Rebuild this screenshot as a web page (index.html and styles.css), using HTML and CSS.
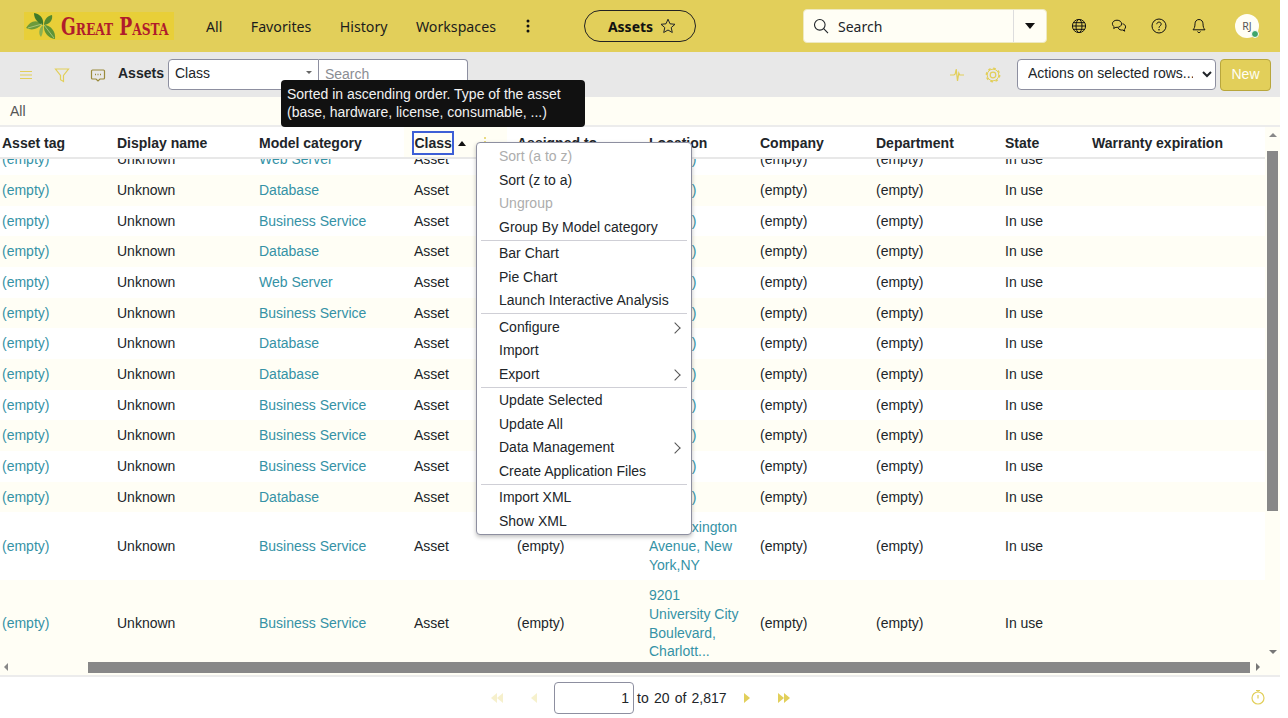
FILE: index.html
```html
<!DOCTYPE html>
<html lang="en">
<head>
  <meta charset="UTF-8" />
  <title>Assets</title>
  <link rel="stylesheet" href="styles.css">
</head>
<body>
<div class="app">
  <!-- top bar -->
  <header class="topbar">
    <div class="logo">
      <svg class="logo-leaf" viewBox="0 0 34 28" width="34" height="28">
        <path d="M1 16 C5 9 11 7 17 12 C13 17 7 19 1 16Z" fill="#6d9a3a"/>
        <path d="M9 1 C15 2 19 6 18 13 C13 11 9 7 9 1Z" fill="#3f7a2a"/>
        <path d="M27 3 C28 8 25 12 19 13 C19 8 22 4 27 3Z" fill="#55892f"/>
        <path d="M19 13 C26 13 31 20 30 27 C23 26 18 20 19 13Z" fill="#5f9436"/>
        <path d="M18 13 C18 18 18 22 16 25 C13 22 14 16 18 13Z" fill="#8ab04e"/>
        <path d="M19 13 L29 26 M17 12 L3 16" stroke="#cfe0a0" stroke-width=".6" fill="none"/>
      </svg>
      <span class="logo-text">Great Pasta</span>
    </div>
    <nav class="mainnav">
      <a>All</a>
      <a>Favorites</a>
      <a>History</a>
      <a>Workspaces</a>
      <svg class="kebab" viewBox="0 0 4 14" width="4" height="14"><circle cx="2" cy="2" r="1.5"/><circle cx="2" cy="7" r="1.5"/><circle cx="2" cy="12" r="1.5"/></svg>
    </nav>
    <div class="pill">
      <b>Assets</b>
      <svg viewBox="0 0 16 16" width="16" height="16"><path d="M8 1.2l2 4.600 5 .5-3.800 3.300 1.100 4.900L8 12l-4.300 2.500 1.100-4.900L1 6.300l5-.5z" fill="none" stroke="#212529" stroke-width="1"/></svg>
    </div>
    <div class="globalsearch">
      <svg viewBox="0 0 16 16" width="16" height="16"><circle cx="6.800" cy="6.800" r="5.300" fill="none" stroke="#212529" stroke-width="1.100"/><path d="M10.700 10.700l4.300 4.500" stroke="#212529" stroke-width="1.100"/></svg>
      <span class="globalsearch-text">Search</span>
      <span class="globalsearch-btn"><i class="caret"></i></span>
    </div>
    <div class="topicons">
      <svg viewBox="0 0 16 16" width="16" height="16"><g fill="none" stroke="#111" stroke-width="1"><circle cx="8" cy="8" r="6.600"/><ellipse cx="8" cy="8" rx="3" ry="6.600"/><path d="M1.400 8h13.200M2.300 4.700h11.400M2.300 11.300h11.400"/></g></svg>
      <svg viewBox="0 0 16 16" width="16" height="16"><g fill="none" stroke="#111" stroke-width="1"><path d="M6 2.200c-2.600 0-4.600 1.500-4.600 3.600 0 1.200.7 2.200 1.700 2.900l-.4 1.800 2.200-1.200c.4.1.8.1 1.100.1 2.600 0 4.600-1.600 4.600-3.600S8.600 2.200 6 2.200z"/><path d="M11.500 5.800c1.800.3 3.100 1.500 3.100 3.100 0 .9-.5 1.800-1.300 2.400l.4 1.900-2-1.200c-1.900.3-3.800-.4-4.500-1.900"/></g></svg>
      <svg viewBox="0 0 16 16" width="16" height="16"><circle cx="8" cy="8" r="7" fill="none" stroke="#111" stroke-width="1"/><path d="M5.800 6.200c0-1.300 1-2.100 2.200-2.100s2.200.8 2.200 2c0 1.900-2.200 1.800-2.200 3.700" fill="none" stroke="#111" stroke-width="1"/><circle cx="8" cy="11.800" r=".8" fill="#111"/></svg>
      <svg viewBox="0 0 16 16" width="16" height="16"><path d="M8 1.500c-2.500 0-4 2-4 4.300 0 3.200-.8 4.700-2 6h12c-1.200-1.300-2-2.800-2-6 0-2.300-1.500-4.300-4-4.300zM6.500 13.500c.3.800.8 1.100 1.500 1.100s1.200-.3 1.500-1.100" fill="none" stroke="#111" stroke-width="1"/></svg>
    </div>
    <div class="avatar">RJ<i class="avatar-dot"></i></div>
  </header>

  <!-- list toolbar -->
  <div class="toolbar">
    <svg class="tool" viewBox="0 0 16 16" width="16" height="16"><path d="M2 4.500h12M2 8h12M2 11.500h12" stroke="#e2cf5a" stroke-width="1.200"/></svg>
    <svg class="tool" viewBox="0 0 16 16" width="16" height="16"><path d="M1.500 2h13L9.500 8.500v6l-3-1.800V8.500z" fill="none" stroke="#e2cf5a" stroke-width="1.200"/></svg>
    <svg class="tool" viewBox="0 0 16 16" width="16" height="16"><path d="M2.500 3h11c.6 0 1 .4 1 1v7c0 .6-.4 1-1 1H10l-2 2-2-2H2.500c-.6 0-1-.4-1-1V4c0-.6.4-1 1-1z" fill="none" stroke="#9a8a3a" stroke-width="1.200"/><path d="M5 7.500h1M7.500 7.500h1M10 7.500h1" stroke="#9a8a3a" stroke-width="1.400"/></svg>
    <b class="toolbar-title">Assets</b>
    <div class="filter">
      <div class="filter-select">Class<i class="caret caret-small"></i></div>
      <input class="filter-input" placeholder="Search">
    </div>
    <div class="toolbar-right">
      <svg viewBox="0 0 16 16" width="16" height="16"><path d="M1 8h4l1.200-1 1-5 1.300 12 1.300-8 .9 2h4.300" fill="none" stroke="#e2cf5a" stroke-width="1.200"/></svg>
      <svg viewBox="0 0 16 16" width="16" height="16"><g fill="none" stroke="#e2cf5a"><circle cx="8" cy="8" r="2.800" stroke-width="1.200"/><circle cx="8" cy="8" r="5.800" stroke-width="1"/><circle cx="8" cy="8" r="6.700" stroke-width="1.400" stroke-dasharray="2.630 2.630"/></g></svg>
      <select class="actions"><option>Actions on selected rows...</option></select>
      <button class="newbtn">New</button>
    </div>
  </div>

  <div class="groupbar">All</div>

  <!-- table -->
  <div class="grid">
    <table class="thead">
      <colgroup><col class="c1"><col class="c2"><col class="c3"><col class="c4"><col class="c5"><col class="c6"><col class="c7"><col class="c8"><col class="c9"><col class="c10"></colgroup>
      <tr>
        <th>Asset tag</th><th>Display name</th><th>Model category</th>
        <th class="th-active"><span class="th-focus">Class</span><i class="sort-up"></i><i class="th-dots"></i></th>
        <th>Assigned to</th><th>Location</th><th>Company</th><th>Department</th><th>State</th><th>Warranty expiration</th>
      </tr>
    </table>
    <div class="tbody-wrap">
      <table class="tbody">
        <colgroup><col class="c1"><col class="c2"><col class="c3"><col class="c4"><col class="c5"><col class="c6"><col class="c7"><col class="c8"><col class="c9"><col class="c10"></colgroup>
        <tr><td><a>(empty)</a></td><td>Unknown</td><td><a>Web Server</a></td><td>Asset</td><td>(empty)</td><td><a>(empty)</a></td><td>(empty)</td><td>(empty)</td><td>In use</td><td></td></tr>
        <tr><td><a>(empty)</a></td><td>Unknown</td><td><a>Database</a></td><td>Asset</td><td>(empty)</td><td><a>(empty)</a></td><td>(empty)</td><td>(empty)</td><td>In use</td><td></td></tr>
        <tr><td><a>(empty)</a></td><td>Unknown</td><td><a>Business Service</a></td><td>Asset</td><td>(empty)</td><td><a>(empty)</a></td><td>(empty)</td><td>(empty)</td><td>In use</td><td></td></tr>
        <tr><td><a>(empty)</a></td><td>Unknown</td><td><a>Database</a></td><td>Asset</td><td>(empty)</td><td><a>(empty)</a></td><td>(empty)</td><td>(empty)</td><td>In use</td><td></td></tr>
        <tr><td><a>(empty)</a></td><td>Unknown</td><td><a>Web Server</a></td><td>Asset</td><td>(empty)</td><td><a>(empty)</a></td><td>(empty)</td><td>(empty)</td><td>In use</td><td></td></tr>
        <tr><td><a>(empty)</a></td><td>Unknown</td><td><a>Business Service</a></td><td>Asset</td><td>(empty)</td><td><a>(empty)</a></td><td>(empty)</td><td>(empty)</td><td>In use</td><td></td></tr>
        <tr><td><a>(empty)</a></td><td>Unknown</td><td><a>Database</a></td><td>Asset</td><td>(empty)</td><td><a>(empty)</a></td><td>(empty)</td><td>(empty)</td><td>In use</td><td></td></tr>
        <tr><td><a>(empty)</a></td><td>Unknown</td><td><a>Database</a></td><td>Asset</td><td>(empty)</td><td><a>(empty)</a></td><td>(empty)</td><td>(empty)</td><td>In use</td><td></td></tr>
        <tr><td><a>(empty)</a></td><td>Unknown</td><td><a>Business Service</a></td><td>Asset</td><td>(empty)</td><td><a>(empty)</a></td><td>(empty)</td><td>(empty)</td><td>In use</td><td></td></tr>
        <tr><td><a>(empty)</a></td><td>Unknown</td><td><a>Business Service</a></td><td>Asset</td><td>(empty)</td><td><a>(empty)</a></td><td>(empty)</td><td>(empty)</td><td>In use</td><td></td></tr>
        <tr><td><a>(empty)</a></td><td>Unknown</td><td><a>Business Service</a></td><td>Asset</td><td>(empty)</td><td><a>(empty)</a></td><td>(empty)</td><td>(empty)</td><td>In use</td><td></td></tr>
        <tr><td><a>(empty)</a></td><td>Unknown</td><td><a>Database</a></td><td>Asset</td><td>(empty)</td><td><a>(empty)</a></td><td>(empty)</td><td>(empty)</td><td>In use</td><td></td></tr>
        <tr><td><a>(empty)</a></td><td>Unknown</td><td><a>Business Service</a></td><td>Asset</td><td>(empty)</td><td><a>101 Lexington Avenue, New York,NY</a></td><td>(empty)</td><td>(empty)</td><td>In use</td><td></td></tr>
        <tr><td><a>(empty)</a></td><td>Unknown</td><td><a>Business Service</a></td><td>Asset</td><td>(empty)</td><td><a>9201 University City Boulevard, Charlott...</a></td><td>(empty)</td><td>(empty)</td><td>In use</td><td></td></tr>
      </table>
    </div>
    <!-- scrollbars -->
    <div class="vscroll"><i class="arrow-up"></i><div class="vthumb"></div><i class="arrow-down"></i></div>
    <div class="hscroll"><i class="arrow-left"></i><div class="hthumb"></div><i class="arrow-right"></i></div>
  </div>

  <!-- pager -->
  <footer class="pager">
    <div class="pager-nav">
      <span class="pg pg-off"><i class="tri-l"></i><i class="tri-l"></i></span>
      <span class="pg pg-off pg-prev"><i class="tri-l"></i></span>
      <input class="pager-input" value="1">
      <span class="pager-text"><span>to</span><span>20</span><span>of</span><span>2,817</span></span>
      <span class="pg"><i class="tri-r"></i></span>
      <span class="pg"><i class="tri-r"></i><i class="tri-r"></i></span>
    </div>
    <svg class="timer" viewBox="0 0 16 16" width="16" height="16"><g fill="none" stroke="#e2cf5a" stroke-width="1.200"><circle cx="8" cy="9" r="6"/><path d="M6 1.500h4M8 1.500v1.500M8 6v3.500"/></g></svg>
  </footer>

  <!-- tooltip + column menu sit over the table -->
  <div class="tooltip">Sorted in ascending order. Type of the asset<br>(base, hardware, license, consumable, ...)</div>
  <ul class="menu">
    <li class="off">Sort (a to z)</li>
    <li>Sort (z to a)</li>
    <li class="off">Ungroup</li>
    <li>Group By Model category</li>
    <li class="sep"></li>
    <li>Bar Chart</li>
    <li>Pie Chart</li>
    <li>Launch Interactive Analysis</li>
    <li class="sep"></li>
    <li class="sub">Configure</li>
    <li>Import</li>
    <li class="sub">Export</li>
    <li class="sep"></li>
    <li>Update Selected</li>
    <li>Update All</li>
    <li class="sub">Data Management</li>
    <li>Create Application Files</li>
    <li class="sep"></li>
    <li>Import XML</li>
    <li>Show XML</li>
  </ul>
</div>
</body>
</html>
```
FILE: styles.css
```css
* {
  box-sizing: border-box;
}
html, body {
  margin: 0;
  background: #fff;
}
body {
  font-family: "Liberation Sans", Arial, sans-serif;
  font-size: 14px;
  color: #212529;
}
.app {
  position: relative;
  width: 1280px;
  height: 718px;
  overflow: hidden;
  display: flex;
  flex-direction: column;
}

/* top bar */
.topbar {
  height: 52px;
  flex: none;
  background: #e2cf5a;
  display: flex;
  align-items: center;
  font-family: "Noto Sans", sans-serif;
  padding-left: 24px;
}
.logo {
  width: 150px;
  height: 28px;
  background: #e8cf38;
  display: flex;
  align-items: center;
  gap: 2px;
  padding-left: 1px;
}
.logo-leaf {
  flex: none;
}
.logo-text {
  font-family: "DejaVu Serif", serif;
  font-weight: 700;
  font-variant: small-caps;
  font-size: 24px;
  color: #b01c2c;
  white-space: nowrap;
  transform: scaleX(.72);
  transform-origin: left center;
}
.mainnav {
  display: flex;
  align-items: center;
  margin-left: 32px;
  width: 378px;
  font-size: 14.2px;
  color: #1c1c1c;
}
.mainnav a {
  margin-right: 28.4px;
}
.kebab {
  fill: #111;
  margin-left: 2px;
}
.pill {
  width: 112px;
  height: 32px;
  border: 1px solid #222;
  border-radius: 16px;
  display: flex;
  align-items: center;
  justify-content: center;
  gap: 7px;
  padding-left: 4px;
  color: #111;
}
.globalsearch {
  width: 244px;
  height: 34px;
  margin-left: 107px;
  background: #fffef5;
  border: 1px solid #eee9c0;
  border-radius: 4px;
  display: flex;
  align-items: center;
  padding-left: 9px;
}
.globalsearch-text {
  flex: 1;
  margin-left: 9px;
}
.globalsearch-btn {
  width: 33px;
  height: 100%;
  border-left: 1px solid #ddd;
  display: flex;
  align-items: center;
  justify-content: center;
}
.caret {
  display: block;
  width: 0;
  height: 0;
  border-left: 5.5px solid transparent;
  border-right: 5.5px solid transparent;
  border-top: 6px solid #111;
}
.caret-small {
  border-left-width: 3.5px;
  border-right-width: 3.5px;
  border-top: 3.5px solid #666;
}
.topicons {
  display: flex;
  margin-left: 24px;
  gap: 24px;
}
.avatar {
  position: relative;
  width: 24px;
  height: 24px;
  margin-left: 28px;
  border-radius: 50%;
  background: #fffef5;
  font-size: 10.5px;
  color: #555;
  text-align: center;
  line-height: 24px;
}
.avatar-dot {
  position: absolute;
  right: 0;
  bottom: 0;
  width: 8px;
  height: 8px;
  border-radius: 50%;
  background: #3fa56b;
  border: 1px solid #fff;
}

/* toolbar */
.toolbar {
  height: 45px;
  flex: none;
  background: #e8e8e8;
  display: flex;
  align-items: center;
  padding-left: 18px;
  gap: 20px;
}
.toolbar-title {
  margin-left: -8px;
  margin-right: -16px;
  position: relative;
  top: -2px;
}
.filter {
  display: flex;
  height: 31px;
}
.filter-select {
  width: 151px;
  background: #fff;
  border: 1px solid #8d8fa0;
  border-radius: 4px 0 0 4px;
  padding: 0 6px 4px;
  display: flex;
  align-items: center;
  justify-content: space-between;
}
.filter-input {
  width: 149px;
  background: #fff;
  border: 1px solid #8d8fa0;
  border-left: 0;
  border-radius: 0 4px 4px 0;
  padding: 0 6px 2px;
  font: inherit;
}
.filter-input::placeholder {
  color: #8a8d93;
}
.toolbar-right {
  margin-left: auto;
  display: flex;
  align-items: center;
  gap: 20px;
  padding-right: 9px;
}
.actions {
  width: 199px;
  height: 31px;
  margin-left: -4px;
  border: 1px solid #8d8fa0;
  border-radius: 4px;
  background: #fff;
  font: inherit;
  color: #212529;
  padding: 0 6px 3px;
}
.newbtn {
  width: 51px;
  height: 32px;
  margin-left: -16px;
  padding-bottom: 3px;
  border: 1px solid #b8a63c;
  border-radius: 4px;
  background: #e2cf5a;
  color: #fffef5;
  font: inherit;
}

.groupbar {
  height: 30px;
  flex: none;
  background: #fffef5;
  border-bottom: 2px solid #ececec;
  padding: 6px 0 0 10px;
  color: #555;
}

/* table */
.grid {
  position: relative;
  flex: 1;
  overflow: hidden;
  background: #fffef5;
}
table {
  width: 1265px;
  table-layout: fixed;
  border-collapse: collapse;
}
.c1 { width: 115px; }
.c2 { width: 142px; }
.c3 { width: 155px; }
.c4 { width: 103px; }
.c5 { width: 132px; }
.c6 { width: 111px; }
.c7 { width: 116px; }
.c8 { width: 129px; }
.c9 { width: 87px; }
.c10 { width: 175px; }
.thead {
  position: relative;
  z-index: 1;
  height: 32px;
  background: #fff;
}
.thead th {
  text-align: left;
  padding: 1px 0 0 2px;
  font-weight: 700;
  border-bottom: 2px solid #e8e8e8;
  white-space: nowrap;
}
.th-active {
  position: relative;
}
.th-active::before {
  content: "";
  position: absolute;
  left: -8px;
  top: 0;
  width: 103px;
  height: 30px;
  background: #fffef5;
}
.th-focus {
  position: relative;
  padding: 2px .5px;
  outline: 2px solid #3d5fd6;
}
.sort-up {
  position: relative;
  display: inline-block;
  margin-left: 6px;
  vertical-align: 2px;
  border-left: 4.5px solid transparent;
  border-right: 4.5px solid transparent;
  border-bottom: 5px solid #111;
}
/* column kebab, mostly hidden under the open menu */
.th-dots {
  position: absolute;
  left: 72px;
  top: 10px;
  width: 2px;
  height: 2px;
  border-radius: 50%;
  background: #e2cf5a;
  box-shadow: 0 4px 0 #e2cf5a, 0 8px 0 #e2cf5a;
}
.tbody-wrap {
  height: 516px;
  overflow: hidden;
}
.tbody {
  margin-top: -14.7px;
  background: #fff;
}
.tbody td {
  padding: 6px 16px 6px 2px;
  line-height: 18.67px;
  vertical-align: middle;
}
.tbody tr:nth-child(even) td {
  background: #fffef5;
}
.tbody a {
  color: #3592a6;
}

/* fake scrollbars */
.vscroll {
  position: absolute;
  top: 0;
  right: 0;
  bottom: 13px;
  width: 15px;
  display: flex;
  flex-direction: column;
  align-items: center;
  background: #fffef5;
  padding: 6px 0 8px;
}
.vthumb {
  width: 11px;
  height: 360px;
  margin-top: 14px;
  background: #888;
}
.hscroll {
  position: absolute;
  left: 0;
  right: 0;
  bottom: 0;
  height: 13px;
  display: flex;
  align-items: flex-start;
  background: #fffef5;
  padding: 0 20px 0 4px;
}
.hthumb {
  height: 11px;
  flex: 1;
  margin: 0 6px 0 80px;
  background: #888;
}
.arrow-up, .arrow-down, .arrow-left, .arrow-right {
  display: block;
  width: 0;
  height: 0;
  flex: none;
  border: 4px solid transparent;
}
.arrow-up {
  border-top: 0;
  border-bottom: 4px solid #888;
}
.arrow-down {
  margin-top: auto;
  border-bottom: 0;
  border-top: 4px solid #777;
}
.arrow-left {
  margin-top: 1px;
  border-left: 0;
  border-right: 4px solid #888;
}
.arrow-right {
  margin-top: 1px;
  border-right: 0;
  border-left: 4px solid #777;
}

/* pager */
.pager {
  position: relative;
  height: 43px;
  flex: none;
  background: #fff;
  border-top: 2px solid #ececec;
  display: flex;
  align-items: center;
}
.pager-nav {
  display: flex;
  align-items: center;
  margin-left: 491px;
}
.pg {
  display: flex;
  margin-right: 28px;
}
.pg-prev {
  margin-right: 17px;
}
.pg-off {
  opacity: .3;
}
.tri-l, .tri-r {
  display: block;
  width: 0;
  height: 0;
  border-top: 5px solid transparent;
  border-bottom: 5px solid transparent;
}
.tri-l {
  border-right: 6px solid #e2cf5a;
}
.tri-r {
  border-left: 6px solid #e2cf5a;
}
.pager-input {
  width: 80px;
  height: 32px;
  border: 1px solid #8d8fa0;
  border-radius: 4px;
  text-align: right;
  font: inherit;
  padding: 0 4px;
  color: #212529;
}
.pager-text {
  display: flex;
  gap: 5.2px;
  margin: 0 17px 0 3px;
}
.timer {
  position: absolute;
  right: 14px;
  top: 12px;
}

/* overlays */
.tooltip {
  position: absolute;
  z-index: 3;
  left: 281px;
  top: 80px;
  width: 304px;
  height: 47px;
  padding: 5px 6px;
  border-radius: 4px;
  background: #111;
  color: #f2f2f2;
  line-height: 18px;
  white-space: nowrap;
}
.menu {
  position: absolute;
  z-index: 3;
  left: 476px;
  top: 142px;
  width: 216px;
  height: 393px;
  margin: 0;
  padding: 2px 0 0;
  list-style: none;
  background: #fff;
  border: 1px solid #8d8fa0;
  border-radius: 4px;
  box-shadow: 0 2px 4px rgba(0, 0, 0, .25);
}
.menu li {
  position: relative;
  height: 23.67px;
  line-height: 23.67px;
  padding-left: 22px;
  white-space: nowrap;
}
.menu li.off {
  color: #adadad;
}
.menu li.sep {
  height: 1px;
  margin: 0 4px 1.5px;
  background: #cfcfd6;
}
.menu li.sub::after {
  content: "";
  position: absolute;
  right: 12px;
  top: 8px;
  width: 7px;
  height: 7px;
  border-top: 1px solid #555;
  border-right: 1px solid #555;
  transform: rotate(45deg);
}
```
